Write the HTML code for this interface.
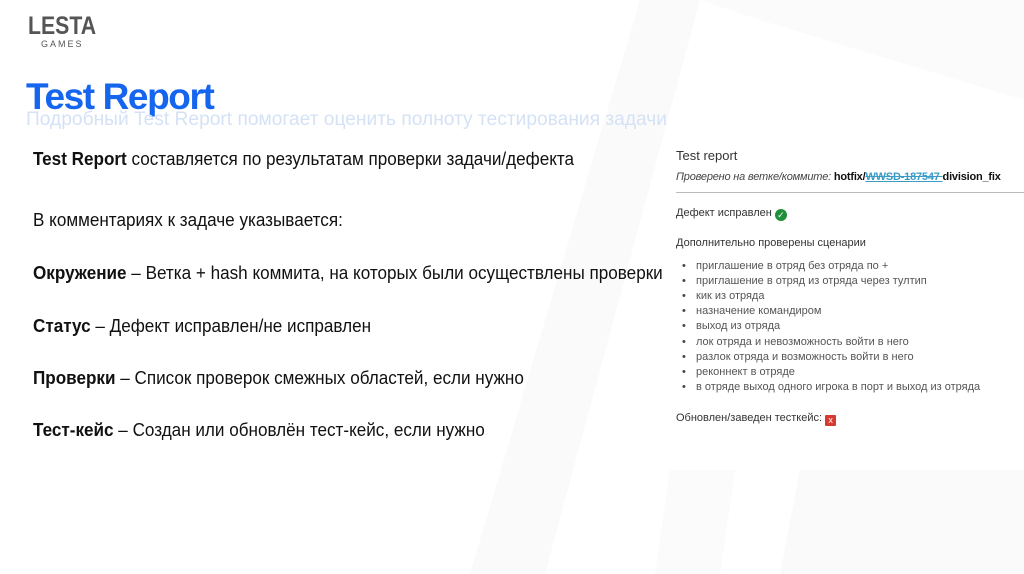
<!DOCTYPE html>
<html><head><meta charset="utf-8"><style>
body{margin:0;width:1024px;height:574px;overflow:hidden;background:#fff;font-family:"Liberation Sans",sans-serif;position:relative}
.a{position:absolute;white-space:nowrap}
.m{font-size:18px;color:#111;left:33px;transform:scaleX(0.95);transform-origin:left}
.p{font-family:"Liberation Sans","DejaVu Sans",sans-serif;color:#333}
.li{font-size:11px;color:#555;left:696px}
.li:before{content:"•";position:absolute;left:-14px;color:#444}
</style></head><body>
<svg class="a" style="left:0;top:0" width="1024" height="574">
<polygon points="640,0 700,0 545,574 470,574" fill="#fafafa"/>
<polygon points="700,0 1024,0 1024,100 760,20" fill="#fbfbfb"/>
<polygon points="800,470 1024,470 1024,574 780,574" fill="#fafafa"/>
<polygon points="670,470 735,470 720,574 655,574" fill="#fbfbfb"/>
</svg>
<div class="a" style="left:670px;top:130px;width:354px;height:340px;background:#fff"></div>
<div class="a" style="left:28px;top:12px;font-size:25px;font-weight:bold;color:#555;transform:scaleX(0.85);transform-origin:left">LESTA</div>
<div class="a" style="left:41px;top:39px;font-size:9px;color:#555;letter-spacing:2px">GAMES</div>
<div class="a" style="left:26px;top:76px;font-size:37px;font-weight:bold;color:#1565ee;letter-spacing:-1.4px">Test Report</div>
<div class="a" style="left:26px;top:109px;font-size:19px;color:#d5e2f6;transform:scaleX(1.01);transform-origin:left">Подробный Test Report помогает оценить полноту тестирования задачи</div>
<div class="a m" style="top:149px"><b>Test Report</b> составляется по результатам проверки задачи/дефекта</div>
<div class="a m" style="top:210px">В комментариях к задаче указывается:</div>
<div class="a m" style="top:263px"><b>Окружение</b> – Ветка + hash коммита, на которых были осуществлены проверки</div>
<div class="a m" style="top:316px"><b>Статус</b> – Дефект исправлен/не исправлен</div>
<div class="a m" style="top:368px"><b>Проверки</b> – Список проверок смежных областей, если нужно</div>
<div class="a m" style="top:420px"><b>Тест-кейс</b> –  Создан или обновлён тест-кейс, если нужно</div>
<div class="a p" style="left:676px;top:148px;font-size:13px">Test report</div>
<div class="a p" style="left:676px;top:171px;font-size:11px;letter-spacing:-0.2px"><i style="color:#444">Проверено на ветке/коммите:</i> <b style="color:#111">hotfix/<span style="color:#3a9bc7;text-decoration:line-through underline">WWSD-187547 </span>division_fix</b></div>
<div class="a" style="left:676px;top:192px;width:348px;height:1px;background:#bbb"></div>
<div class="a p" style="left:676px;top:207px;font-size:11px">Дефект исправлен <span style="display:inline-block;width:12px;height:12px;border-radius:6px;background:#1f8f3a;color:#fff;font-size:9px;line-height:12px;text-align:center;vertical-align:-2px">✓</span></div>
<div class="a p" style="left:676px;top:237px;font-size:11px">Дополнительно проверены сценарии</div>
<div class="a li p" style="top:260px">приглашение в отряд без отряда по +</div>
<div class="a li p" style="top:275px">приглашение в отряд из отряда через тултип</div>
<div class="a li p" style="top:290px">кик из отряда</div>
<div class="a li p" style="top:305px">назначение командиром</div>
<div class="a li p" style="top:320px">выход из отряда</div>
<div class="a li p" style="top:336px">лок отряда и невозможность войти в него</div>
<div class="a li p" style="top:351px">разлок отряда и возможность войти в него</div>
<div class="a li p" style="top:366px">реконнект в отряде</div>
<div class="a li p" style="top:381px">в отряде выход одного игрока в порт и выход из отряда</div>
<div class="a p" style="left:676px;top:412px;font-size:11px">Обновлен/заведен тесткейс: <span style="display:inline-block;width:11px;height:11px;background:#d63a33;color:#fff;font-size:9px;line-height:11px;text-align:center;vertical-align:-2px;border-radius:1px">x</span></div>
</body></html>
